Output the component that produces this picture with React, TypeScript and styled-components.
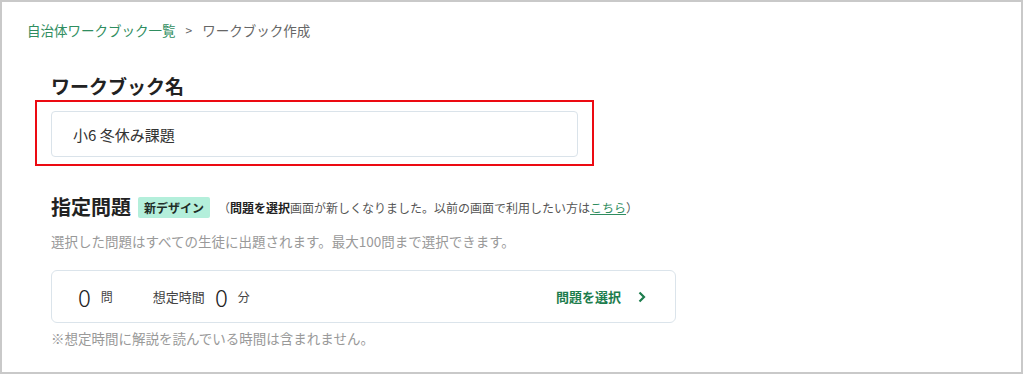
import React from "react";
import styled, { createGlobalStyle } from "styled-components";

const GlobalStyle = createGlobalStyle`
  html, body {
    margin: 0;
    padding: 0;
    background: #fff;
  }
  body {
    font-family: "Noto Sans CJK JP", "Noto Sans", sans-serif;
    color: #333;
  }
`;

const Frame = styled.div`
  box-sizing: border-box;
  width: 1023px;
  height: 374px;
  border: 2px solid #c9c9c9;
  padding: 18px 0 0 25px;
  overflow: hidden;
`;

const Breadcrumb = styled.nav`
  display: flex;
  align-items: center;
  height: 20px;
  font-size: 13.5px;
  line-height: 20px;
  color: #666;
`;

const CrumbLink = styled.a`
  color: #2f8d60;
  text-decoration: none;
`;

const CrumbSep = styled.span`
  margin: 0 10px;
  font-size: 12px;
`;

const Main = styled.div`
  padding-left: 24px;
`;

const FieldTitle = styled.h2`
  margin: 34px 0 2px;
  font-size: 19px;
  line-height: 24px;
  font-weight: 600;
  color: #222;
`;

const Highlight = styled.div`
  box-sizing: border-box;
  width: 559px;
  margin-left: -16px;
  padding: 9px 14px 7px;
  border: 2px solid #ec0a12;
`;

const TextInput = styled.input`
  box-sizing: border-box;
  display: block;
  width: 527px;
  height: 46px;
  padding: 0 21px;
  border: 1.5px solid #dae3ea;
  border-radius: 4px;
  font-family: inherit;
  font-size: 15px;
  color: #333;
  outline: none;
`;

const SectionHead = styled.div`
  display: flex;
  align-items: center;
  margin-top: 27px;
  height: 28px;
`;

const SectionTitle = styled.h2`
  margin: 0;
  font-size: 20px;
  line-height: 28px;
  font-weight: 600;
  color: #222;
`;

const Badge = styled.span`
  margin-left: 7px;
  padding: 0 6px;
  height: 21px;
  line-height: 21px;
  background: #b4efdb;
  border-radius: 2px;
  font-size: 12px;
  font-weight: 700;
  color: #1f2d27;
`;

const Notice = styled.span`
  margin-left: 8px;
  font-size: 12px;
  color: #555;
`;

const Strong = styled.b`
  color: #222;
`;

const NoticeLink = styled.a`
  color: #2f8d60;
  text-decoration: underline;
`;

const Hint = styled.p<{ $gap?: number }>`
  margin: ${({ $gap }) => $gap ?? 0}px 0 0;
  font-size: 13.5px;
  line-height: 20px;
  color: #999;
`;

const SummaryBox = styled.div`
  box-sizing: border-box;
  display: flex;
  align-items: center;
  width: 625px;
  height: 53px;
  margin-top: 19px;
  padding: 0 29px 0 26px;
  border: 1.5px solid #dbe4eb;
  border-radius: 6px;
`;

const Stat = styled.div<{ $gap?: number }>`
  display: flex;
  align-items: center;
  margin-left: ${({ $gap }) => $gap ?? 0}px;
`;

const BigNum = styled.span`
  font-size: 24px;
  font-weight: 300;
  color: #222;
  margin-right: 10px;
`;

const Unit = styled.span`
  font-size: 12px;
  color: #444;
`;

const Label = styled.span`
  font-size: 13px;
  color: #444;
  margin-right: 10px;
`;

const SelectButton = styled.button`
  display: flex;
  align-items: center;
  gap: 17px;
  margin-left: auto;
  padding: 0;
  border: none;
  background: none;
  font-family: inherit;
  font-size: 13px;
  font-weight: 700;
  color: #1d7d4d;
  cursor: pointer;
`;

function Chevron() {
  return (
    <svg width="8" height="12" viewBox="0 0 8 12" fill="none">
      <path d="M1.5 1.5 L6 6 L1.5 10.5" stroke="#1d7d4d" strokeWidth="2.2" />
    </svg>
  );
}

export default function App() {
  return (
    <>
      <GlobalStyle />
      <Frame>
        <Breadcrumb>
          <CrumbLink>自治体ワークブック一覧</CrumbLink>
          <CrumbSep>&gt;</CrumbSep>
          <span>ワークブック作成</span>
        </Breadcrumb>
        <Main>
          <FieldTitle>ワークブック名</FieldTitle>
          <Highlight>
            <TextInput defaultValue="小6 冬休み課題" />
          </Highlight>
          <SectionHead>
            <SectionTitle>指定問題</SectionTitle>
            <Badge>新デザイン</Badge>
            <Notice>
              （<Strong>問題を選択</Strong>画面が新しくなりました。以前の画面で利用したい方は
              <NoticeLink>こちら</NoticeLink>）
            </Notice>
          </SectionHead>
          <Hint $gap={10}>
            選択した問題はすべての生徒に出題されます。最大100問まで選択できます。
          </Hint>
          <SummaryBox>
            <Stat>
              <BigNum>0</BigNum>
              <Unit>問</Unit>
            </Stat>
            <Stat $gap={40}>
              <Label>想定時間</Label>
              <BigNum>0</BigNum>
              <Unit>分</Unit>
            </Stat>
            <SelectButton>
              問題を選択
              <Chevron />
            </SelectButton>
          </SummaryBox>
          <Hint $gap={5}>※想定時間に解説を読んでいる時間は含まれません。</Hint>
        </Main>
      </Frame>
    </>
  );
}
